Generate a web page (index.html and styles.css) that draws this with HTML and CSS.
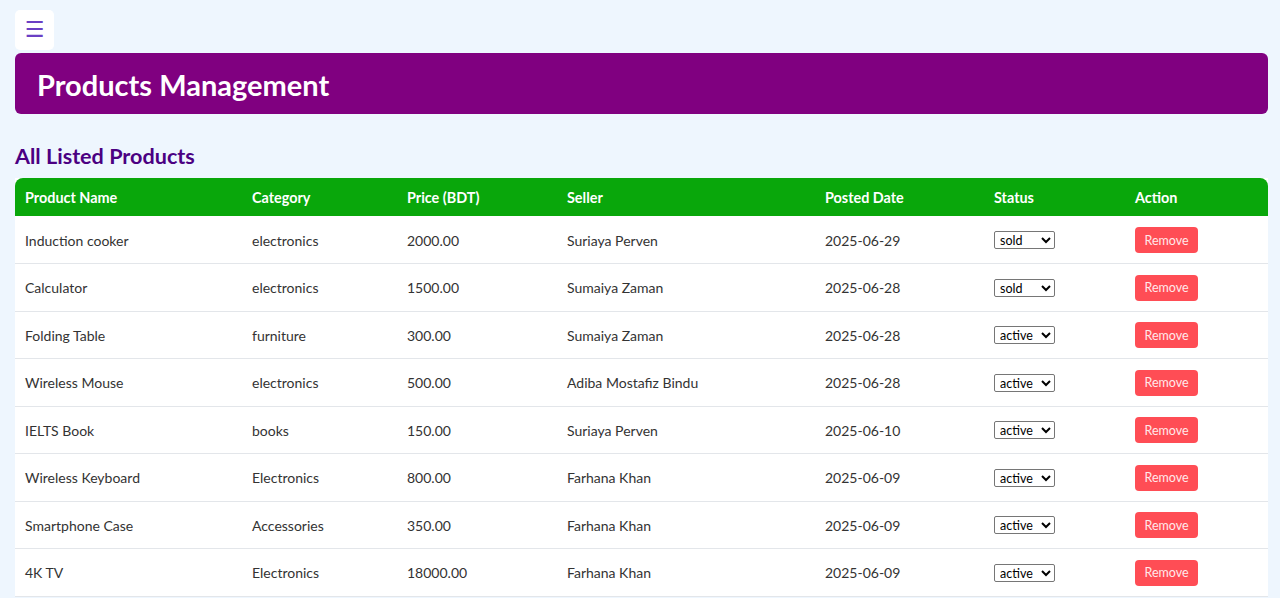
FILE: index.html
```html
<!DOCTYPE html>
<html lang="en">
<head>
<meta charset="utf-8">
<title>Products Management</title>
<link rel="stylesheet" href="styles.css">
</head>
<body>
<div class="page">
  <button class="menu-btn" type="button" aria-label="Menu">☰</button>
  <header class="banner">
    <h1 class="banner-title">Products Management</h1>
  </header>
  <h2 class="section-title">All Listed Products</h2>
  <table class="products">
    <colgroup>
      <col class="c-name"><col class="c-cat"><col class="c-price"><col class="c-seller"><col class="c-date"><col class="c-status"><col class="c-action">
    </colgroup>
    <thead>
      <tr><th>Product Name</th><th>Category</th><th>Price (BDT)</th><th>Seller</th><th>Posted Date</th><th>Status</th><th>Action</th></tr>
    </thead>
    <tbody>
      <tr><td>Induction cooker</td><td>electronics</td><td>2000.00</td><td>Suriaya Perven</td><td>2025-06-29</td><td><select class="status"><option selected>sold</option><option>active</option></select></td><td><button class="remove" type="button">Remove</button></td></tr>
      <tr><td>Calculator</td><td>electronics</td><td>1500.00</td><td>Sumaiya Zaman</td><td>2025-06-28</td><td><select class="status"><option selected>sold</option><option>active</option></select></td><td><button class="remove" type="button">Remove</button></td></tr>
      <tr><td>Folding Table</td><td>furniture</td><td>300.00</td><td>Sumaiya Zaman</td><td>2025-06-28</td><td><select class="status"><option>sold</option><option selected>active</option></select></td><td><button class="remove" type="button">Remove</button></td></tr>
      <tr><td>Wireless Mouse</td><td>electronics</td><td>500.00</td><td>Adiba Mostafiz Bindu</td><td>2025-06-28</td><td><select class="status"><option>sold</option><option selected>active</option></select></td><td><button class="remove" type="button">Remove</button></td></tr>
      <tr><td>IELTS Book</td><td>books</td><td>150.00</td><td>Suriaya Perven</td><td>2025-06-10</td><td><select class="status"><option>sold</option><option selected>active</option></select></td><td><button class="remove" type="button">Remove</button></td></tr>
      <tr><td>Wireless Keyboard</td><td>Electronics</td><td>800.00</td><td>Farhana Khan</td><td>2025-06-09</td><td><select class="status"><option>sold</option><option selected>active</option></select></td><td><button class="remove" type="button">Remove</button></td></tr>
      <tr><td>Smartphone Case</td><td>Accessories</td><td>350.00</td><td>Farhana Khan</td><td>2025-06-09</td><td><select class="status"><option>sold</option><option selected>active</option></select></td><td><button class="remove" type="button">Remove</button></td></tr>
      <tr><td>4K TV</td><td>Electronics</td><td>18000.00</td><td>Farhana Khan</td><td>2025-06-09</td><td><select class="status"><option>sold</option><option selected>active</option></select></td><td><button class="remove" type="button">Remove</button></td></tr>
    </tbody>
  </table>
</div>
</body>
</html>
```
FILE: styles.css
```css
* { box-sizing: border-box; }
html, body { margin: 0; padding: 0; }
body {
  background: #eef6fe;
  font-family: Lato, "Open Sans", sans-serif;
  color: #333;
}
.page {
  padding: 10px 12px 0 15px;
}
.menu-btn {
  display: flex;
  align-items: center;
  justify-content: center;
  width: 39px;
  height: 40px;
  margin: 0 0 3px 0;
  padding: 0 0 1px 0;
  border: none;
  border-radius: 5px;
  background: #ffffff;
  color: #6b3fc4;
  font-size: 22px;
  font-family: "DejaVu Sans", sans-serif;
  line-height: 1;
}
.banner {
  background: #800080;
  border-radius: 6px;
  height: 61px;
  display: flex;
  align-items: center;
  padding: 2px 22px 0 22px;
}
.banner-title {
  margin: 0;
  color: #ffffff;
  font-size: 29px;
  font-weight: 700;
}
.section-title {
  margin: 28px 0 8px 0;
  color: #4b0082;
  font-size: 21.6px;
  font-weight: 700;
  line-height: 28px;
}
.products {
  width: 100%;
  border-collapse: collapse;
  background: #ffffff;
  font-size: 14px;
}
.c-name { width: 227px; }
.c-cat { width: 155px; }
.c-price { width: 160px; }
.c-seller { width: 258px; }
.c-date { width: 169px; }
.c-status { width: 141px; }
.c-action { width: 143px; }
.products th {
  background: #09a70b;
  color: #ffffff;
  text-align: left;
  font-weight: 700;
  font-size: 14.4px;
  height: 38px;
  padding: 0 10px;
}
.products th:first-child { border-top-left-radius: 8px; }
.products th:last-child { border-top-right-radius: 8px; }
.products td {
  height: 47.5px;
  padding: 1px 10px 0 10px;
  border-bottom: 1px solid #e3e6ea;
  color: #333;
}
.status {
  width: 61px;
  height: 18px;
  font-size: 12.5px;
  font-family: Lato, sans-serif;
  padding: 0 0 0 1px;
  border: 1px solid #767676;
  border-radius: 2px;
  background: #fff;
  color: #000;
}
.remove {
  width: 63px;
  height: 26px;
  border: none;
  border-radius: 4px;
  background: #ff4d55;
  color: #ffe9ea;
  font-family: Lato, sans-serif;
  font-size: 12.5px;
  padding: 0;
}
```
